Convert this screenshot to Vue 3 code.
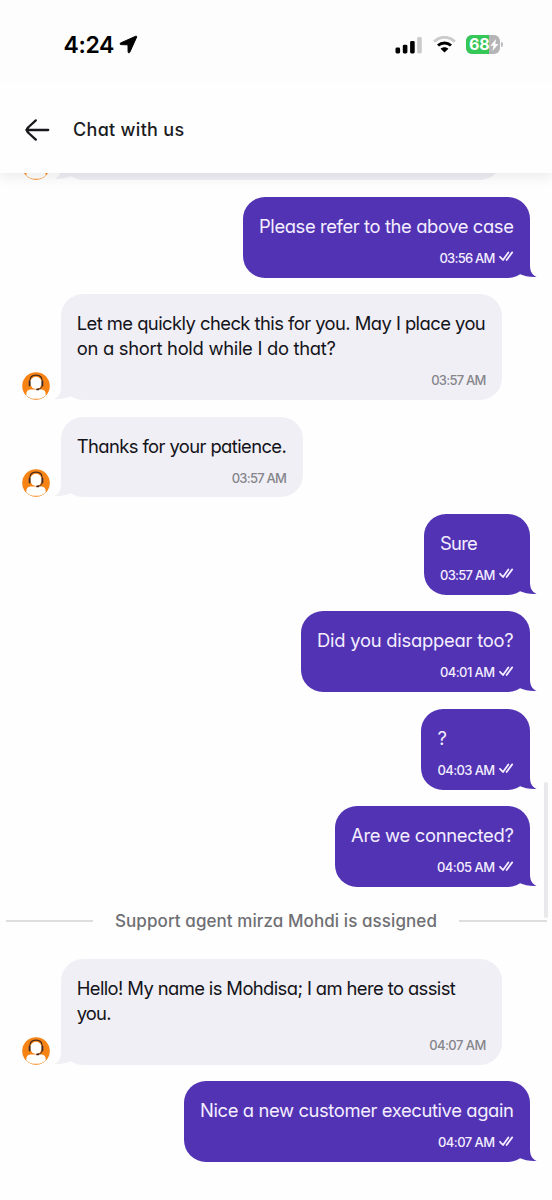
<script setup>
const messages = [
  { out: false, cut: true, size: 'wide', lines: [] },
  { out: true, lines: [['Please refer to the above case', 254.5]], time: '03:56 AM' },
  { out: false, size: 'wide', lines: [['Let me quickly check this for you. May I place you', 408.5], ['on a short hold while I do that?', 259]], time: '03:57 AM' },
  { out: false, lines: [['Thanks for your patience.', 209.5]], time: '03:57 AM' },
  { out: true, lines: [['Sure', 37]], time: '03:57 AM' },
  { out: true, lines: [['Did you disappear too?', 196.5]], time: '04:01 AM' },
  { out: true, lines: [['?', 9]], time: '04:03 AM' },
  { out: true, lines: [['Are we connected?', 162.5]], time: '04:05 AM' },
  { notice: 'Support agent mirza Mohdi is assigned' },
  { out: false, size: 'wide', lines: [['Hello! My name is Mohdisa; I am here to assist', 378.5], ['you.', 34]], time: '04:07 AM' },
  { out: true, lines: [['Nice a new customer executive again', 313.5]], time: '04:07 AM' },
]
const timeWidths = { '03:56 AM': 55, '03:57 AM': 54.5, '04:01 AM': 54.5, '04:03 AM': 57, '04:05 AM': 57.5, '04:07 AM': 56.5 }

// Tracks a label so that it fills the given width
const vFit = {
  mounted(el, { value }) {
    const natural = el.getBoundingClientRect().width
    el.style.letterSpacing = (value - natural) / el.textContent.length + 'px'
  },
}
</script>

<template>
  <div class="screen">
    <div class="status">
      <span class="clock"><span v-fit="50.5">4:24</span></span>
      <svg class="loc" width="19" height="19" viewBox="0 0 19 19"><path d="M16.8 1.2 1.6 8c-.9.5-.7 1.6.3 1.6l7.1.2.1 7.1c0 1.1 1.2 1.3 1.7.3L17.7 2c.2-.6-.3-1-.9-.8Z" fill="#000" stroke="#000" stroke-width="1" stroke-linejoin="round" /></svg>
      <svg class="signal" width="28" height="18" viewBox="0 0 28 18">
        <rect x="0.5" y="10.5" width="4.6" height="6" rx="1.4" />
        <rect x="7.8" y="7.7" width="4.6" height="8.8" rx="1.4" />
        <rect x="15.1" y="4" width="4.6" height="12.5" rx="1.4" />
        <rect x="22.2" y="0" width="4.6" height="16.5" rx="1.4" fill="#cbcbcb" />
      </svg>
      <svg class="wifi" width="23" height="17" viewBox="0 0 23 17" fill="none" stroke-width="3">
        <path d="M1.2 5.6C7-.1 16-.1 21.8 5.6" stroke="#cbcbcb" />
        <path d="M5 9.5c3.8-3.500 9.2-3.500 13 0" stroke="#000" />
        <path d="m11.5 16.6-3.9-3.9c2.2-2 5.6-2 7.8 0Z" fill="#000" />
      </svg>
      <div class="battery">
        <span class="level"></span>
        <span class="pct" v-fit="20.5">68</span>
        <svg class="bolt" width="9" height="12" viewBox="0 0 9 12"><path d="M6 0 .5 6.7h3L2.4 12 8.5 5h-3.2Z" fill="#fff" /></svg>
      </div>
      <i class="nub"></i>
    </div>
    <header class="header">
      <svg class="back" width="26" height="24" viewBox="0 0 26 24" fill="none" stroke="#17171c" stroke-width="2.3" stroke-linecap="round" stroke-linejoin="round"><path d="M24.2 12H2.4M11.8 2.4 4.6 9q-3.6 3 0 6l7.2 6.6" /></svg>
      <h1 class="title"><span v-fit="111.5">Chat with us</span></h1>
    </header>

    <main class="chat">
      <template v-for="(m, i) in messages" :key="i">
        <div v-if="m.notice" class="notice"><i></i><span v-fit="322">{{ m.notice }}</span><i></i></div>
        <div v-else class="row" :class="{ out: m.out }">
          <svg v-if="!m.out" class="avatar" width="28" height="28" viewBox="0 0 28 28">
            <circle cx="14" cy="14" r="13.8" fill="#f68314" />
            <path d="M4.3 23.4c-.2-3.6 1-5.7 4.3-6h10.8c3.3.3 4.5 2.4 4.3 6C21 25.9 17.8 26.8 14 26.8s-7-.9-9.7-3.4Z" fill="#fff" />
            <path d="M7.7 11.5V9.7C7.7 5.6 10.2 3.2 14 3.2s6.3 2.4 6.3 6.5v1.8" fill="none" stroke="#40291f" stroke-width="1.2" />
            <ellipse cx="14" cy="10.9" rx="5.7" ry="6.2" fill="#fff" />
            <path d="M7.6 9.6v3.8M20.4 9.6v3.8" stroke="#3a2b2b" stroke-width="1.8" stroke-linecap="round" />
            <path d="M20.3 14q-.9 3-4.3 3.3" fill="none" stroke="#40291f" stroke-width="0.9" />
            <ellipse cx="15.7" cy="17.4" rx="1.6" ry="0.9" fill="#40291f" />
          </svg>
          <div class="bubble" :class="[m.size, { cut: m.cut }]">
            <p v-for="l in m.lines" :key="l[0]" class="line"><span v-fit="l[1]">{{ l[0] }}</span></p>
            <div v-if="m.time" class="meta">
              <span v-fit="timeWidths[m.time]">{{ m.time }}</span>
              <svg v-if="m.out" class="ticks" width="15" height="11" viewBox="0 0 15 11" fill="none" stroke="#f4eeff" stroke-width="1.8" stroke-linecap="round" stroke-linejoin="round"><path d="m1 5.8 3 3.2L9.4 1.4M7.6 9 13.2 1.4" /></svg>
            </div>
            <svg class="tail" width="18" height="24" viewBox="0 0 18 24"><path d="M11 0v10.5c0 6 1.2 9.8 6.6 12.5C11 23.4 5 22 1.200 20.300L3 2Z" /></svg>
          </div>
        </div>
      </template>
    </main>
    <i class="scrollbar"></i>
  </div>
</template>

<style>
body { margin: 0; background: #fefefe; }
</style>

<style scoped>
.screen {
  position: relative;
  width: 552px;
  height: 1200px;
  overflow: hidden;
  background: #fefefe;
  font-family: Inter, "Open Sans", sans-serif;
  font-feature-settings: "cv11" 1;
  color: #14141a;
}
.status {
  position: relative;
  z-index: 2;
  display: flex;
  height: 82px;
  box-sizing: border-box;
  padding: 34px 0 0 63.5px;
  align-items: flex-start;
  background: #fdfdfd;
}
.clock { width: 55px; font-size: 23px; line-height: 22px; font-weight: 600; color: #000; white-space: nowrap; }
.loc { margin-top: 1px; }
.signal { margin: 3px 0 0 257.5px; }
.wifi { margin: 2px 0 0 10px; }
.battery {
  position: relative;
  display: flex;
  width: 34px;
  height: 19px;
  margin: 1px 0 0 10px;
  overflow: hidden;
  border-radius: 6px;
  background: #b5b5b7;
}
.level { position: absolute; left: 0; top: 0; width: 23px; height: 19px; background: #36c759; }
.pct { position: relative; align-self: flex-start; margin-left: 3px; color: #fff; font-size: 16px; line-height: 19px; font-weight: 700; }
.bolt { position: relative; margin: 4px 0 0 0; }
.nub { width: 2px; height: 5px; margin: 8px 0 0 1px; border-radius: 0 3px 3px 0; background: #bababc; }
.header {
  position: relative;
  z-index: 1;
  display: flex;
  height: 91px;
  box-sizing: border-box;
  padding: 4px 0 0 24px;
  align-items: center;
  background: #fefefe;
  box-shadow: 0 2px 14px rgba(20, 20, 40, 0.1);
}
.title { margin: 0 0 0 23px; font-size: 18px; line-height: 24px; font-weight: 550; color: #1b1b22; white-space: nowrap; }
.chat { display: flex; flex-direction: column; gap: 16.7px; margin-top: -73.6px; }
.row { display: flex; align-items: flex-end; padding: 0 22px; }
.row.out { justify-content: flex-end; }
.avatar { margin-right: 10.7px; flex: none; }
.bubble {
  position: relative;
  box-sizing: border-box;
  padding: 17px 16.5px 10.8px 16px;
  border-radius: 22px;
  background: #f0eff5;
}
.wide { width: 441.5px; }
.cut { height: 80.8px; }
.out .bubble { padding-left: 16.5px; background: #5133b4; color: #f4eeff; }
.line { margin: 0; height: 24.7px; font-size: 18.4px; line-height: 24.7px; white-space: nowrap; }
.meta {
  display: flex;
  height: 18px;
  margin-top: 10.3px;
  justify-content: flex-end;
  font-size: 13px;
  line-height: 18px;
  color: #85858b;
  white-space: nowrap;
}
.row:not(.out) .meta { font-weight: 450; }
.out .meta { font-weight: 500; color: #f4eeff; }
.ticks { margin: 2.5px 0 0 4px; }
.tail { position: absolute; bottom: 0; right: -7px; fill: #5133b4; }
.row:not(.out) .tail { right: auto; left: -6.5px; transform: scaleX(-1); fill: #f0eff5; }
.notice {
  display: flex;
  height: 24px;
  margin: 5.3px 5.5px 9.3px;
  align-items: center;
  justify-content: space-between;
  font-size: 17px;
  line-height: 24px;
  font-weight: 500;
  color: #6f6f74;
  white-space: nowrap;
}
.notice i { width: 87.5px; height: 1.5px; background: #dedee0; }
.scrollbar { position: absolute; left: 544px; top: 782px; width: 4px; height: 136px; border-radius: 2px; background: #e9e9eb; }
</style>
